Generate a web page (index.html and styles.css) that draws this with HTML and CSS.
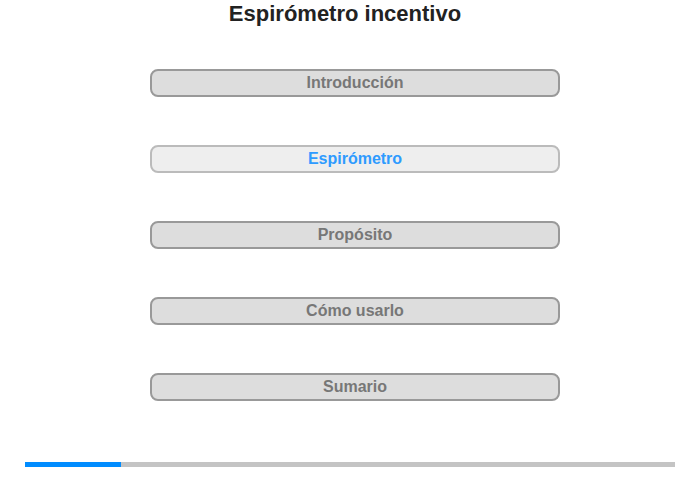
FILE: index.html
```html
<!DOCTYPE html>
<html lang="es">
<head>
    <meta charset="UTF-8">
    <meta name="viewport" content="width=device-width, initial-scale=1.0">
    <title>Espirómetro incentivo</title>
    <link rel="stylesheet" href="styles.css">
</head>
<body>
    <div class="page">
        <h1>Espirómetro incentivo</h1>
        <nav class="menu">
            <button class="menu-item">Introducción</button>
            <button class="menu-item active">Espirómetro</button>
            <button class="menu-item">Propósito</button>
            <button class="menu-item">Cómo usarlo</button>
            <button class="menu-item">Sumario</button>
        </nav>
        <div class="progress">
            <div class="progress-fill" style="width: 96px"></div>
        </div>
    </div>
</body>
</html>
```

FILE: styles.css
```css
* {
    margin: 0;
    padding: 0;
    box-sizing: border-box;
    font-family: Arial, "Liberation Sans", Helvetica, sans-serif;
}
body {
    background-color: white;
}
.page {
    width: 700px;
    height: 480px;
}
h1 {
    padding: 1px 10px 0 0;
    font-size: 22px;
    line-height: 26px;
    font-weight: bold;
    color: #222;
    text-align: center;
}
.menu {
    width: 410px;
    margin: 42px 0 0 150px;
    display: flex;
    flex-direction: column;
    gap: 48px;
}
.menu-item {
    height: 28px;
    line-height: 22px;
    border: 2px solid #999;
    border-radius: 8px;
    background-color: #ddd;
    color: #777;
    font-size: 16px;
    font-weight: bold;
    text-align: center;
    cursor: pointer;
}
.menu-item.active {
    background-color: #eee;
    border-color: #bbb;
    color: #2e9bff;
}
.progress {
    margin: 61px 25px 0;
    height: 5px;
    background-color: #c4c4c4;
}
.progress-fill {
    height: 100%;
    background-color: #008cff;
}
```
